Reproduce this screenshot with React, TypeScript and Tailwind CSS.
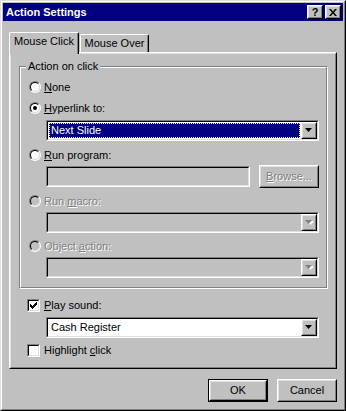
import type { ReactNode } from "react";

// win98-ish bevels
const raisedOuter = "border border-t-white border-l-white border-r-black border-b-black";
const raisedInner = "border border-t-[#dfdfdf] border-l-[#dfdfdf] border-r-[#808080] border-b-[#808080]";
const sunkenOuter = "border border-t-[#808080] border-l-[#808080] border-r-white border-b-white";
const sunkenInner = "border border-t-black border-l-black border-r-[#dfdfdf] border-b-[#dfdfdf]";
const disabledText = "text-[#808080] [text-shadow:1px_1px_0_#fff]";

const Key = ({ children }: { children: ReactNode }) => <span className="underline underline-offset-[1px]">{children}</span>;

const TitleBtn = ({ children }: { children: ReactNode }) => (
  <div className={`w-[16px] h-[14px] bg-[#c0c0c0] flex ${raisedOuter}`}>
    <div className={`flex-1 flex items-center justify-center ${raisedInner}`}>{children}</div>
  </div>
);

const Radio = ({ checked, disabled }: { checked?: boolean; disabled?: boolean }) => (
  <span className={`w-[12px] h-[12px] rounded-full flex shrink-0 ${sunkenOuter}`}>
    <span className={`flex-1 rounded-full flex items-center justify-center ${sunkenInner} ${disabled ? "bg-[#c0c0c0]" : "bg-white"}`}>
      {checked && <span className="w-[4px] h-[4px] rounded-full bg-black" />}
    </span>
  </span>
);

const Check = ({ checked }: { checked?: boolean }) => (
  <span className={`w-[13px] h-[13px] flex shrink-0 ${sunkenOuter}`}>
    <span className={`flex-1 bg-white flex items-center justify-center ${sunkenInner}`}>
      {checked && (
        <svg width="7" height="7" viewBox="0 0 7 7">
          <path d="M0 2h1v1h1v1h1v-1h1v-1h1v-1h1v-1h1v3h-1v1h-1v1h-1v1h-1v1h-1v-1h-1v-1h-1z" fill="#000" />
        </svg>
      )}
    </span>
  </span>
);

const Arrow = ({ disabled }: { disabled?: boolean }) => (
  <svg width="8" height="5" viewBox="0 0 8 5">
    {disabled && <path d="M2 1h7l-3.5 4z" fill="#fff" />}
    <path d="M0 0h7l-3.5 4z" fill={disabled ? "#808080" : "#000"} />
  </svg>
);

const Field = ({ className, disabled, children }: { className?: string; disabled?: boolean; children?: ReactNode }) => (
  <div className={`h-[21px] flex ${sunkenOuter} ${className ?? ""}`}>
    <div className={`flex-1 flex items-stretch ${sunkenInner} ${disabled ? "bg-[#c0c0c0]" : "bg-white"}`}>{children}</div>
  </div>
);

const Combo = ({ value, selected, disabled }: { value?: string; selected?: boolean; disabled?: boolean }) => (
  <Field className="w-[273px]" disabled={disabled}>
    <div className="flex-1 p-[1px] flex">
      {value &&
        (selected ? (
          <div className="flex-1 bg-[#000080] border border-dotted border-[#ffff7f] text-white pl-[1px] leading-[13px]">{value}</div>
        ) : (
          <div className="flex-1 pl-[2px] pt-[1px] leading-[13px]">{value}</div>
        ))}
    </div>
    <div className={`w-[16px] flex ${raisedOuter} bg-[#c0c0c0]`}>
      <div className={`flex-1 flex items-center justify-center ${raisedInner}`}>
        <Arrow disabled={disabled} />
      </div>
    </div>
  </Field>
);

const Button = ({ children, isDefault, disabled }: { children: ReactNode; isDefault?: boolean; disabled?: boolean }) => {
  const face = (
    <div className={`flex-1 flex ${raisedOuter}`}>
      <div className={`flex-1 flex items-center justify-center ${raisedInner} ${disabled ? disabledText : ""}`}>{children}</div>
    </div>
  );
  return (
    <div className={`w-[60px] h-[23px] flex bg-[#c0c0c0] ${isDefault ? "border border-black" : ""}`}>{face}</div>
  );
};

const Option = ({ label, checked, disabled }: { label: ReactNode; checked?: boolean; disabled?: boolean }) => (
  <div className="h-[16px] flex items-center gap-[3px]">
    <Radio checked={checked} disabled={disabled} />
    <span className={disabled ? disabledText : ""}>{label}</span>
  </div>
);

export default function App() {
  return (
    <div className="w-[346px] h-[411px] bg-[#c0c0c0] border border-t-[#dfdfdf] border-l-[#dfdfdf] border-r-black border-b-black font-['Liberation_Sans',Arial,sans-serif] text-[11px] leading-[13px] text-black select-none">
      <div className="h-full flex flex-col border border-t-white border-l-white border-r-[#808080] border-b-[#808080] p-[1px]">
        <div className="h-[18px] shrink-0 bg-[#000080] flex items-center justify-between pl-[3px] pr-[2px]">
          <span className="text-white font-bold">Action Settings</span>
          <div className="flex gap-[2px]">
            <TitleBtn>
              <span className="font-bold text-[11px] leading-[10px]">?</span>
            </TitleBtn>
            <TitleBtn>
              <svg width="8" height="7" viewBox="0 0 8 7">
                <path d="M0 0h2l2 2.5 2-2.5h2l-3 3.5 3 3.5h-2l-2-2.5-2 2.5h-2l3-3.5z" fill="#000" />
              </svg>
            </TitleBtn>
          </div>
        </div>

        <div className="flex flex-col px-[6px] pt-[11px]">
          <div className="h-[20px] flex items-end">
            <div className="relative z-10 -mb-[2px] w-[70px] h-[22px] bg-[#c0c0c0] border-l border-t border-r border-l-white border-t-white border-r-black rounded-t-[2px] shadow-[inset_-1px_0_0_#808080] flex justify-center pt-[2px]">
              Mouse Click
            </div>
            <div className="ml-[1px] w-[69px] h-[18px] border-l border-t border-r border-l-white border-t-white border-r-black rounded-t-[2px] shadow-[inset_-1px_0_0_#808080] flex justify-center pt-[2px]">
              Mouse Over
            </div>
          </div>

          <div className="h-[317px] flex border border-t-white border-l-white border-r-black border-b-black">
            <div className={`flex-1 flex flex-col ${raisedInner}`}>
              <div className="relative mt-[12px] ml-[8px] w-[309px] flex border border-t-[#808080] border-l-[#808080] border-r-white border-b-white">
                <span className="absolute top-[-7px] left-[6px] px-[2px] bg-[#c0c0c0]">Action on click</span>
                <div className="flex-1 flex flex-col pl-[8px] pt-[11px] pb-[9px] border border-t-white border-l-white border-r-[#808080] border-b-[#808080]">
                  <Option label={<><Key>N</Key>one</>} />
                  <div className="mt-[5px]">
                    <Option checked label={<><Key>H</Key>yperlink to:</>} />
                  </div>
                  <div className="mt-[4px] ml-[17px]">
                    <Combo value="Next Slide" selected />
                  </div>
                  <div className="mt-[6px]">
                    <Option label={<><Key>R</Key>un program:</>} />
                  </div>
                  <div className="mt-[2px] ml-[17px] flex items-start gap-[9px]">
                    <Field className="w-[204px] mt-[1px]" disabled />
                    <Button disabled>
                      <span><Key>B</Key>rowse...</span>
                    </Button>
                  </div>
                  <div className="mt-[5px]">
                    <Option disabled label={<>Run <Key>m</Key>acro:</>} />
                  </div>
                  <div className="mt-[3px] ml-[17px]">
                    <Combo disabled />
                  </div>
                  <div className="mt-[5px]">
                    <Option disabled label={<>Object <Key>a</Key>ction:</>} />
                  </div>
                  <div className="mt-[3px] ml-[17px]">
                    <Combo disabled />
                  </div>
                </div>
              </div>

              <div className="mt-[8px] ml-[16px] h-[16px] flex items-center gap-[4px]">
                <Check checked />
                <span><Key>P</Key>lay sound:</span>
              </div>
              <div className="mt-[4px] ml-[35px]">
                <Combo value="Cash Register" />
              </div>
              <div className="mt-[4px] ml-[16px] h-[16px] flex items-center gap-[4px]">
                <Check />
                <span>Highlight <Key>c</Key>lick</span>
              </div>
            </div>
          </div>

          <div className="mt-[10px] flex justify-end gap-[9px]">
            <Button isDefault>OK</Button>
            <Button>Cancel</Button>
          </div>
        </div>
      </div>
    </div>
  );
}
